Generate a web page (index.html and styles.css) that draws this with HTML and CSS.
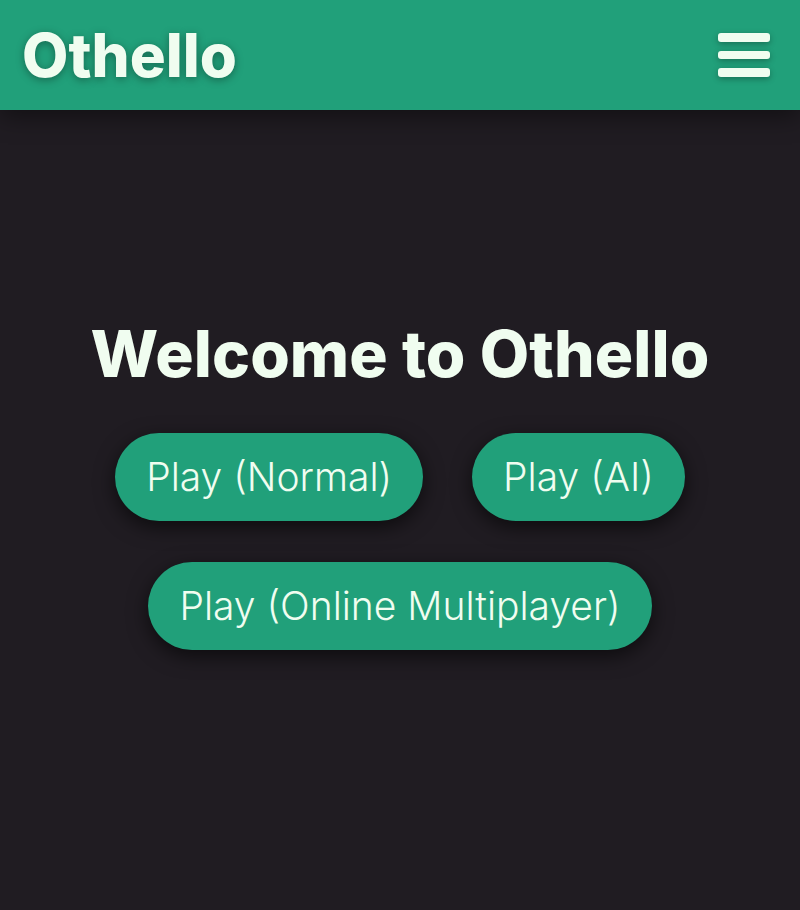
FILE: index.html
```html
<!DOCTYPE html>
<html lang="en">
<head>
<meta charset="utf-8">
<title>Othello</title>
<link rel="stylesheet" href="styles.css">
</head>
<body>
<header class="topbar">
  <h1 class="brand">Othello</h1>
  <button class="menu" aria-label="Menu">
    <span class="bar"></span>
    <span class="bar"></span>
    <span class="bar"></span>
  </button>
</header>
<main class="home">
  <h2 class="welcome">Welcome to Othello</h2>
  <div class="actions">
    <button class="play">Play (Normal)</button>
    <button class="play">Play (AI)</button>
    <button class="play">Play (Online Multiplayer)</button>
  </div>
</main>
</body>
</html>
```
FILE: styles.css
```css
* { box-sizing: border-box; }
html, body {
  margin: 0;
  padding: 0;
  height: 100%;
}
body {
  background: #201c22;
  font-family: Inter, "Noto Sans", sans-serif;
  color: #f0fdf0;
}
.topbar {
  height: 110px;
  background: #21a07a;
  display: flex;
  align-items: center;
  justify-content: space-between;
  padding: 0 30px 0 22px;
  box-shadow: 0 6px 24px rgba(0,0,0,0.45);
  position: relative;
  z-index: 1;
}
.brand {
  margin: 0;
  font-size: 60px;
  font-weight: 800;
  color: #f0fdf0;
  text-shadow: 0 2px 8px rgba(0,0,0,0.35);
  line-height: 1;
}
.menu {
  background: none;
  border: 0;
  padding: 0;
  width: 52px;
  display: flex;
  flex-direction: column;
  gap: 9px;
  cursor: pointer;
}
.bar {
  display: block;
  height: 8.5px;
  width: 52px;
  background: #f0fdf0;
  border-radius: 3px;
  box-shadow: 0 2px 6px rgba(0,0,0,0.3);
}
.home {
  display: flex;
  flex-direction: column;
  align-items: center;
  padding-top: 206px;
}
.welcome {
  margin: 0 0 40px;
  font-size: 64px;
  font-weight: 800;
  letter-spacing: 0.1px;
  line-height: 1.2;
}
.actions {
  display: flex;
  flex-wrap: wrap;
  justify-content: center;
  gap: 41px 49px;
  max-width: 620px;
}
.play {
  font-family: Inter, "Noto Sans", sans-serif;
  font-weight: 300;
  font-size: 39px;
  color: #f0fdf0;
  background: #21a07a;
  border: 0;
  border-radius: 44px;
  height: 88px;
  padding: 0 31px;
  box-shadow: 0 6px 20px rgba(0,0,0,0.6);
  cursor: pointer;
}
```
